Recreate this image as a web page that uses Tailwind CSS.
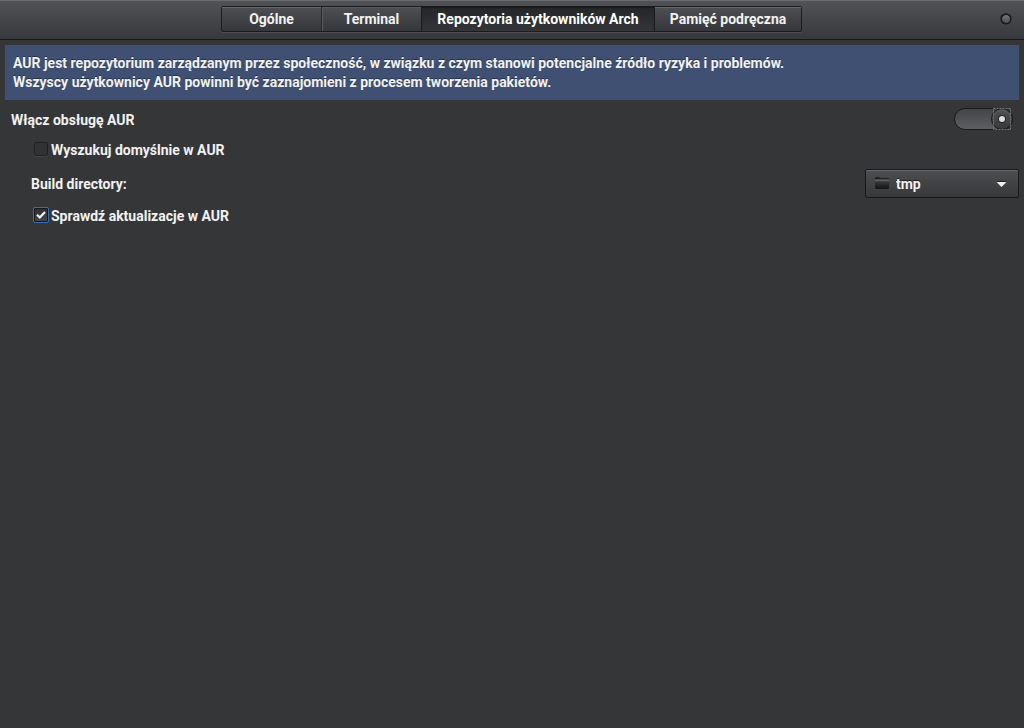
<!DOCTYPE html>
<html lang="pl" class="h-full">
<head>
  <meta charset="UTF-8"/>
  <meta name="viewport" content="width=device-width, initial-scale=1.0"/>
  <title>Preferencje</title>
  <script src="https://cdn.jsdelivr.net/npm/@tailwindcss/browser@4"></script>
</head>
<body class="min-h-full bg-[#353638] font-['Roboto',sans-serif] text-sm font-bold text-[#f2f2f2]">

<!-- header -->
<header class="grid h-10 grid-cols-[1fr_auto_1fr] items-center border-t border-b border-t-[#6a6c6f] border-b-[#18191a] bg-linear-to-b from-[#505255] to-[#38393b] pr-3 pb-[2px] pl-[11px]">
  <nav role="tablist" class="col-start-2 flex h-[26px] rounded-xs border border-[#1a1b1c] bg-linear-to-b from-[#4d4f52] to-[#36373a] shadow-[0_1px_0_#4c4e50] text-shadow-[0_-1px_0_#1a1b1c]">
    <button role="tab" class="w-[100px] border-r border-[#27282a] shadow-[inset_0_1px_0_#66686b]">Ogólne</button>
    <button role="tab" class="w-[100px] border-r border-[#1a1b1c] shadow-[inset_1px_1px_0_#5a5c5f]">Terminal</button>
    <button role="tab" aria-selected="true" class="w-[233px] border-r border-[#1a1b1c] bg-linear-to-b from-[#242628] to-[#343538] text-white shadow-[inset_0_1px_1px_#191a1b]">Repozytoria użytkowników Arch</button>
    <button role="tab" class="w-[146px] shadow-[inset_0_1px_0_#66686b]">Pamięć podręczna</button>
  </nav>
  <button aria-label="Zamknij" class="justify-self-end">
    <svg class="block size-3" viewBox="0 0 12 12">
      <defs><linearGradient id="dot" x2="0" y2="1"><stop stop-color="#77797c"/><stop offset="1" stop-color="#4a4c4e"/></linearGradient></defs>
      <circle cx="6" cy="6.6" r="5.3" fill="none" stroke="#737577" stroke-width="1"/>
      <circle cx="6" cy="6" r="4.9" fill="url(#dot)" stroke="#191a1c" stroke-width="1.9"/>
    </svg>
  </button>
</header>

<main class="p-[5px]">
  <!-- warning -->
  <p class="border-b border-[#3a5080] bg-[#3f5073] px-2 pt-[9px] pb-[7px] leading-[19px] text-shadow-[0_-1px_0_#26324b]">
    AUR jest repozytorium zarządzanym przez społeczność, w związku z czym stanowi potencjalne źródło ryzyka i problemów.<br>
    Wszyscy użytkownicy AUR powinni być zaznajomieni z procesem tworzenia pakietów.
  </p>

  <!-- switch -->
  <div class="flex h-10 items-center justify-between px-[6px]">
    <label for="aur">Włącz obsługę AUR</label>
    <div class="relative mb-[2px] h-6 w-[60px]">
      <input id="aur" type="checkbox" role="switch" checked class="absolute inset-0 appearance-none outline-none"/>
      <svg class="pointer-events-none absolute inset-0" width="60" height="24" viewBox="0 0 60 24">
        <defs>
          <linearGradient id="track" x2="0" y2="1"><stop stop-color="#434446"/><stop offset="1" stop-color="#5d5f62"/></linearGradient>
          <linearGradient id="knob" x2="0" y2="1"><stop stop-color="#505255"/><stop offset="1" stop-color="#37383a"/></linearGradient>
        </defs>
        <rect x="1.5" y="1.5" width="58" height="21" rx="10.5" fill="url(#track)" stroke="#18191a"/>
        <circle cx="49" cy="12" r="10.5" fill="url(#knob)" stroke="#18191a"/>
        <path d="M41 8a9.5 9.5 0 0 1 16 0" fill="none" stroke="#626467" stroke-width=".6"/>
        <rect x="40.5" y="1.5" width="17" height="21" fill="none" stroke="#76787a" stroke-dasharray="2 1"/>
        <circle cx="49" cy="12" r="4" fill="#252628"/>
        <circle cx="49" cy="12" r="3" fill="#dcdcda"/>
      </svg>
    </div>
  </div>

  <!-- options -->
  <div class="flex h-5 items-center pl-[29px]">
    <input id="search" type="checkbox" class="mb-[2px] size-[14px] appearance-none rounded-xs border border-[#202122] bg-[#313234] shadow-[0_1px_0_#444547]"/>
    <label for="search" class="pl-[3px]">Wyszukuj domyślnie w AUR</label>
  </div>

  <div class="flex items-center justify-between pt-[9px] pl-[26px]">
    <label for="dir">Build directory:</label>
    <div class="relative">
      <select id="dir" class="block h-[29px] w-[154px] appearance-none rounded-xs border border-[#18191a] bg-linear-to-b from-[#4c4e51] to-[#37383a] pl-[30px] shadow-[inset_0_1px_0_#66686b] text-shadow-[0_-1px_0_#1a1b1c]">
        <option>tmp</option>
      </select>
      <svg class="pointer-events-none absolute top-2 left-[9px]" width="16" height="13" viewBox="0 0 16 13">
        <defs><linearGradient id="folder" x2="0" y2="1"><stop stop-color="#4a4b4d"/><stop offset=".5" stop-color="#2c2d2e"/><stop offset="1" stop-color="#121314"/></linearGradient></defs>
        <path d="M1 4V1Q1 0 2 0h3l1 1h8q1 0 1 1v2z" fill="#202122"/>
        <path d="M1 2h14v9q0 1-1 1H2q-1 0-1-1z" fill="url(#folder)"/>
        <path d="M1 3.5h14" stroke="#606264"/>
      </svg>
      <svg class="pointer-events-none absolute top-3 right-3" width="11" height="7" viewBox="0 0 11 7">
        <path d="M.5 0h10L5.500 5z" fill="#1a1b1c"/>
        <path d="M.5 1h10L5.500 6z" fill="#f2f2f2"/>
      </svg>
    </div>
  </div>

  <div class="flex h-9 items-center pl-[28px]">
    <div class="relative mb-[2px] size-4">
      <input id="updates" type="checkbox" checked class="block size-4 appearance-none rounded-xs border border-[#3c6cb4] bg-linear-to-b from-[#2c2d2f] to-[#48494c] shadow-[inset_0_0_0_1px_#17181c]"/>
      <svg class="pointer-events-none absolute inset-0" width="16" height="16" viewBox="0 0 16 16">
        <path d="M4 7.800l2.800 2.700L12 5" fill="none" stroke="#f2f2f2" stroke-width="2.200"/>
      </svg>
    </div>
    <label for="updates" class="pl-[2px]">Sprawdź aktualizacje w AUR</label>
  </div>
</main>
</body>
</html>
